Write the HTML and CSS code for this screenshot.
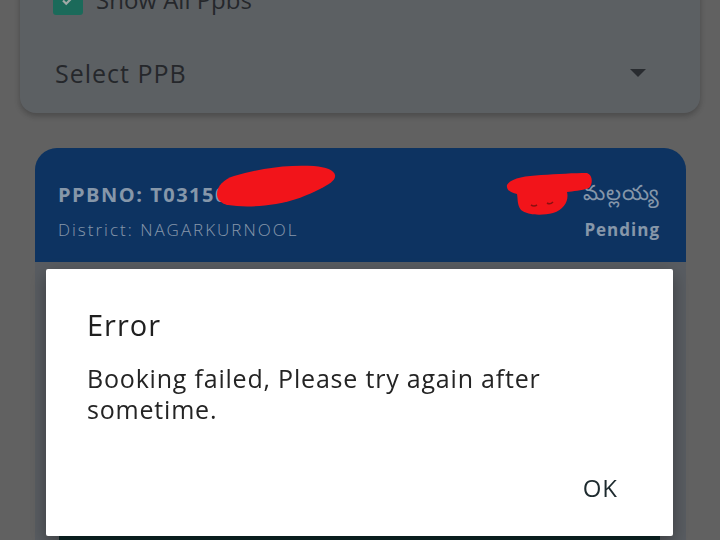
FILE: index.html
```html
<!DOCTYPE html>
<html lang="en">
<head>
    <meta charset="UTF-8">
    <meta name="viewport" content="width=device-width, initial-scale=1.0">
    <link rel="stylesheet" href="styles.css">
    <title>PPB Booking</title>
</head>
<body>
    <div class="page">
        <div class="filter-card">
            <div class="check-row">
                <span class="checkbox">
                    <svg width="16" height="16" viewBox="0 0 16 16"><path d="M3 8.5l3.2 3.2L13 4.8" fill="none" stroke="#e8f2ef" stroke-width="2.2"/></svg>
                </span>
                <span class="check-label">Show All Ppbs</span>
            </div>
            <div class="select-row">
                <span>Select PPB</span>
                <span class="arrow"></span>
            </div>
        </div>

        <div class="ppb-card">
            <div class="ppb-head">
                <div class="ppb-line">
                    <span class="ppb-no">PPBNO: T03150</span>
                    <span class="ppb-name">మల్లయ్య</span>
                </div>
                <div class="ppb-line">
                    <span class="ppb-district">District: NAGARKURNOOL</span>
                    <span class="ppb-status">Pending</span>
                </div>
            </div>
            <div class="ppb-body">
                <button class="book-btn"></button>
            </div>
        </div>
    </div>

    <!-- dim layer behind the dialog -->
    <div class="scrim"></div>

    <div class="dialog">
        <h2>Error</h2>
        <p>Booking failed, Please try again after sometime.</p>
        <div class="dialog-actions">
            <button class="ok-btn">OK</button>
        </div>
    </div>

    <!-- red marks drawn over the screenshot -->
    <svg class="redact redact-no" width="124" height="44" viewBox="0 0 124 44">
        <path d="M3 30 C3 22 10 15 20 12 C30 9 40 7 50 5 C66 2 84 1 100 2 C112 3 120 6 121 11 C122 16 116 20 106 25 C94 31 80 37 62 40 C44 43 26 43 14 41 C6 39 3 35 3 30 Z" fill="#f2141a"/>
    </svg>
    <svg class="redact redact-name" width="90" height="44" viewBox="0 0 90 44">
        <path d="M2 13 C6 6 20 4 36 3 C52 2 70 1 82 1 C88 3 88 12 84 16 C76 19 68 19 62 20 C64 28 60 37 48 41 C36 44 22 43 16 38 C12 33 13 27 12 22 C6 21 1 18 2 13 Z" fill="#f2141a"/>
        <path d="M26 33 q3 2 6 0" fill="none" stroke="#8a1010" stroke-width="1.6"/>
        <path d="M42 31 q3 2 6 -1" fill="none" stroke="#8a1010" stroke-width="1.6"/>
    </svg>
</body>
</html>
```

FILE: styles.css
```css
/* screen underneath, shown through the dim layer */
body {
    margin: 0;
    width: 720px;
    height: 540px;
    overflow: hidden;
    background-color: #8c8c8c;
    font-family: "Open Sans", "Noto Sans", sans-serif;
}

.page {
    padding: 0 20px;
}

.filter-card {
    margin-top: -30px;
    background-color: #858a8f;
    border-radius: 0 0 16px 16px;
    padding: 13px 0 0 33px;
    height: 143px;
    box-sizing: border-box;
    box-shadow: 0 3px 6px rgba(0, 0, 0, 0.25);
}

.check-row {
    display: flex;
    align-items: center;
    gap: 13px;
}

.checkbox {
    width: 30px;
    height: 30px;
    border-radius: 3px;
    background-color: #289982;
    display: flex;
    align-items: center;
    justify-content: center;
}

.check-label {
    font-size: 24px;
    color: #35393e;
}

.select-row {
    display: flex;
    align-items: center;
    justify-content: space-between;
    margin: 40px 0 0 2px;
    padding-right: 54px;
    font-size: 25px;
    letter-spacing: 1px;
    color: #35393e;
}

.arrow {
    width: 0;
    height: 0;
    border-left: 8px solid transparent;
    border-right: 8px solid transparent;
    border-top: 8px solid #3c4046;
}

.ppb-card {
    margin: 35px 14px 0 15px;
    background-color: #7f848b;
    border-radius: 22px 22px 0 0;
    overflow: hidden;
}

.ppb-head {
    background-color: #134a8b;
    height: 114px;
    box-sizing: border-box;
    padding: 30px 26px 0 23px;
    color: #c1d8f3;
}

.ppb-line {
    display: flex;
    justify-content: space-between;
    align-items: center;
}

.ppb-line + .ppb-line {
    margin-top: 8px;
}

.ppb-no {
    font-size: 20px;
    font-weight: 700;
    letter-spacing: 1.5px;
}

.ppb-name {
    font-size: 21px;
    letter-spacing: 1px;
}

.ppb-district {
    font-size: 17px;
    font-weight: 300;
    letter-spacing: 2px;
}

.ppb-status {
    font-size: 17px;
    font-weight: 700;
    letter-spacing: 1px;
}

.ppb-body {
    height: 400px;
    padding: 270px 26px 0 24px;
    box-sizing: border-box;
}

.book-btn {
    width: 100%;
    height: 50px;
    border: none;
    border-radius: 4px;
    background-color: #113636;
}

.scrim {
    position: fixed;
    inset: 0;
    background-color: rgba(0, 0, 0, 0.3);
}

.dialog {
    position: fixed;
    left: 46px;
    top: 269px;
    width: 627px;
    height: 267px;
    box-sizing: border-box;
    padding: 36px 41px 0 41px;
    background-color: #fff;
    border-radius: 2px;
    box-shadow: 0 6px 18px rgba(0, 0, 0, 0.35);
}

.dialog h2 {
    margin: 0;
    font-size: 29px;
    font-weight: 400;
    letter-spacing: 1px;
    color: #1f1f1f;
}

.dialog p {
    margin: 19px 0 0;
    padding-right: 60px;
    font-size: 25px;
    line-height: 31px;
    letter-spacing: 0.8px;
    color: #242424;
}

.dialog-actions {
    display: flex;
    justify-content: flex-end;
    margin-top: 46px;
    padding-right: 14px;
}

.ok-btn {
    border: none;
    background: none;
    padding: 0;
    font-family: inherit;
    font-size: 24px;
    letter-spacing: 1px;
    color: #1d2a2e;
}

.redact {
    position: fixed;
}

.redact-no {
    left: 214px;
    top: 164px;
}

.redact-name {
    left: 505px;
    top: 172px;
}
```
